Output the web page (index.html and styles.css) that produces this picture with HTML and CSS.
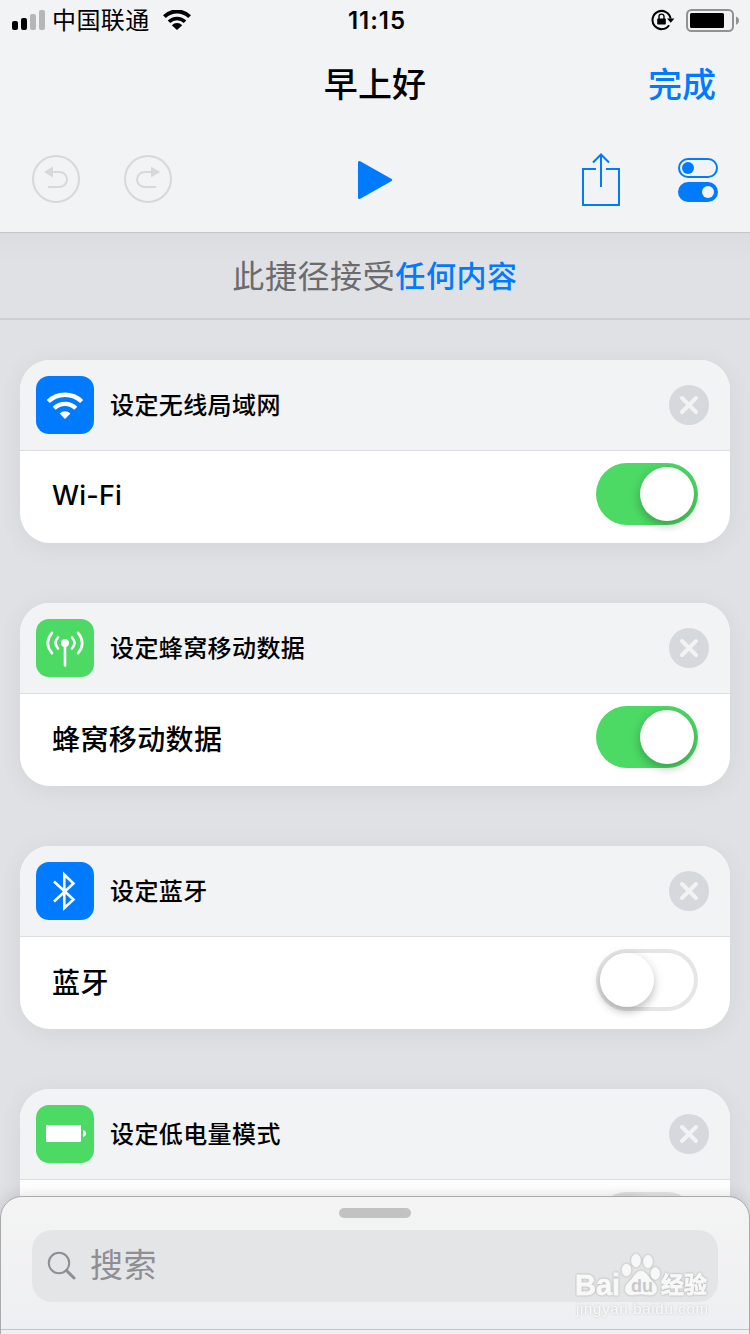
FILE: index.html
```
<!DOCTYPE html>
<html lang="zh-CN">
<head>
    <meta charset="UTF-8">
    <title>早上好</title>
    <link rel="stylesheet" href="styles.css">
</head>
<body>
<div class="screen">
    <header class="top">
        <div class="status">
            <div class="status-left">
                <svg class="signal" width="34" height="20" viewBox="0 0 34 20">
                    <rect x="0" y="11" width="6" height="9" rx="2"/>
                    <rect x="9" y="8" width="6" height="12" rx="2"/>
                    <rect x="18" y="4" width="6" height="16" rx="2" fill="#b5b6b7"/>
                    <rect x="27" y="0" width="6" height="20" rx="2" fill="#b5b6b7"/>
                </svg>
                <span class="carrier">中国联通</span>
                <svg width="28" height="20" viewBox="0 0 28 20">
                    <path d="M1.4 6.6a18 18 0 0 1 25.2 0" fill="none" stroke="#000" stroke-width="4"/>
                    <path d="M6 11.800a11.4 11.4 0 0 1 16 0" fill="none" stroke="#000" stroke-width="3.6"/>
                    <path d="M8.800 15.200a7 7 0 0 1 10.400 0L14 20z"/>
                </svg>
            </div>
            <span class="clock">11:15</span>
            <div class="status-right">
                <svg width="24" height="22" viewBox="0 0 24 22">
                    <path d="M18.1 16.2A9.1 9.1 0 1 1 19.6 9.6" fill="none" stroke="#000" stroke-width="2"/>
                    <path d="M16 9.4h7.4l-3.7 4.4z"/>
                    <rect x="6.2" y="9.5" width="8.6" height="6" rx="0.8"/>
                    <path d="M8 10V7.6a2.5 2.5 0 0 1 5 0V10" fill="none" stroke="#000" stroke-width="1.4"/>
                </svg>
                <svg class="battery" width="54" height="24" viewBox="0 0 54 24">
                    <rect x="1" y="1" width="46" height="21" rx="4.5" fill="none" stroke="#919293" stroke-width="2"/>
                    <rect x="4" y="4" width="34" height="15" rx="1.5"/>
                    <path d="M50 7.5c4 1.2 4 7 0 8.2z" fill="#919293"/>
                </svg>
            </div>
        </div>
        <div class="title-row">
            <h1>早上好</h1>
            <a class="done">完成</a>
        </div>
        <div class="toolbar">
            <div class="tools">
                <svg width="48" height="48" viewBox="0 0 48 48" fill="none" stroke="#d7d8d9" stroke-width="2">
                    <circle cx="24" cy="24" r="23"/>
                    <path d="M20 17h7.500a7.500 7.500 0 0 1 0 15H16"/>
                    <path d="M12 17l9-5.5v11z" fill="#d7d8d9" stroke="none"/>
                </svg>
                <svg width="48" height="48" viewBox="0 0 48 48" fill="none" stroke="#d7d8d9" stroke-width="2">
                    <circle cx="24" cy="24" r="23"/>
                    <path d="M28 17h-7.500a7.500 7.500 0 0 0 0 15H32"/>
                    <path d="M36 17l-9-5.5v11z" fill="#d7d8d9" stroke="none"/>
                </svg>
            </div>
            <svg class="play" width="34" height="40" viewBox="0 0 34 40">
                <path d="M1.5 2.5v35L32.5 20z" fill="#007aff" stroke="#007aff" stroke-width="3" stroke-linejoin="round"/>
            </svg>
            <div class="tools tools-right">
                <svg class="share" width="38" height="54" viewBox="0 0 38 54" fill="none" stroke="#007aff" stroke-width="2">
                    <path d="M14 16H1v36h36V16H24"/>
                    <path d="M19 34V2M11 9.5L19 1.500l8 8"/>
                </svg>
                <svg width="40" height="44" viewBox="0 0 40 44">
                    <rect x="1" y="1" width="38" height="18" rx="9" fill="none" stroke="#007aff" stroke-width="2"/>
                    <circle cx="10" cy="10" r="6" fill="#007aff"/>
                    <rect x="0" y="24" width="40" height="20" rx="10" fill="#007aff"/>
                    <circle cx="30" cy="34" r="6" fill="#f1f3f5"/>
                </svg>
            </div>
        </div>
    </header>

    <div class="accepts"><span>此捷径接受</span><a>任何内容</a></div>

    <main class="actions">
        <section class="card">
            <div class="card-head">
                <svg class="icon blue" width="58" height="58" viewBox="0 0 58 58">
                    <path d="M12.300 25.500a24 24 0 0 1 33.400 0" fill="none" stroke="#fff" stroke-width="4.400"/>
                    <path d="M18.200 32.200a15.500 15.500 0 0 1 21.600 0" fill="none" stroke="#fff" stroke-width="4.200"/>
                    <path d="M23.600 37.400a8 8 0 0 1 10.800 0L29 43z" fill="#fff"/>
                </svg>
                <h2>设定无线局域网</h2>
                <svg class="close" width="40" height="40" viewBox="0 0 40 40">
                    <circle cx="20" cy="20" r="20"/>
                    <path d="M13 13l14 14M27 13L13 27"/>
                </svg>
            </div>
            <div class="card-body">
                <span class="latin">Wi-Fi</span>
                <div class="switch on"></div>
            </div>
        </section>

        <section class="card">
            <div class="card-head">
                <svg class="icon green" width="58" height="58" viewBox="0 0 58 58" fill="none" stroke="#fff" stroke-width="2.600" stroke-linecap="round">
                    <circle cx="29" cy="24" r="4" fill="#fff" stroke="none"/>
                    <path d="M29 26v20.500"/>
                    <path d="M22 18.500q-5 5.500 0 11M36 18.500q5 5.500 0 11"/>
                    <path d="M16 13.800q-8.500 10.200 0 20.400M42 13.800q8.500 10.200 0 20.400"/>
                </svg>
                <h2>设定蜂窝移动数据</h2>
                <svg class="close" width="40" height="40" viewBox="0 0 40 40">
                    <circle cx="20" cy="20" r="20"/>
                    <path d="M13 13l14 14M27 13L13 27"/>
                </svg>
            </div>
            <div class="card-body">
                <span>蜂窝移动数据</span>
                <div class="switch on"></div>
            </div>
        </section>

        <section class="card">
            <div class="card-head">
                <svg class="icon blue" width="58" height="58" viewBox="0 0 58 58">
                    <path d="M18 19.500L37.500 37.500 28.300 46V12.500l9.200 9L18 39.500" fill="none" stroke="#fff" stroke-width="2.600"/>
                </svg>
                <h2>设定蓝牙</h2>
                <svg class="close" width="40" height="40" viewBox="0 0 40 40">
                    <circle cx="20" cy="20" r="20"/>
                    <path d="M13 13l14 14M27 13L13 27"/>
                </svg>
            </div>
            <div class="card-body">
                <span>蓝牙</span>
                <div class="switch"></div>
            </div>
        </section>

        <section class="card">
            <div class="card-head">
                <svg class="icon green" width="58" height="58" viewBox="0 0 58 58">
                    <rect x="10" y="20" width="35" height="17" rx="1" fill="#fff"/>
                    <path d="M47 25c4 .8 4 6.200 0 7z" fill="#fff"/>
                </svg>
                <h2>设定低电量模式</h2>
                <svg class="close" width="40" height="40" viewBox="0 0 40 40">
                    <circle cx="20" cy="20" r="20"/>
                    <path d="M13 13l14 14M27 13L13 27"/>
                </svg>
            </div>
            <div class="card-body">
                <div></div>
                <div class="switch"></div>
            </div>
        </section>
    </main>

    <!-- search drawer, slides over the list -->
    <div class="drawer">
        <div class="grabber"></div>
        <div class="search">
            <svg width="30" height="30" viewBox="0 0 30 30" fill="none" stroke="#8e8e93">
                <circle cx="12" cy="12" r="10.200" stroke-width="2"/>
                <path d="M19.500 19.500l7.500 7.500" stroke-width="3" stroke-linecap="round"/>
            </svg>
            <span>搜索</span>
        </div>
    </div>

    <div class="watermark">
        <svg width="136" height="70" viewBox="0 0 136 70">
            <g class="wm-mark">
                <ellipse cx="51.500" cy="20" rx="4.500" ry="6"/>
                <ellipse cx="61" cy="10.500" rx="4.500" ry="6.500"/>
                <ellipse cx="73" cy="11.500" rx="4.500" ry="6.500"/>
                <ellipse cx="80.300" cy="23.500" rx="4.500" ry="6"/>
                <path d="M66 21c5 0 7 6 11 10 8 7 5 14-2 14-4 0-6-1-9-1s-5 1-9 1c-7 0-10-7-2-14 4-4 6-10 11-10z"/>
            </g>
            <text class="wm-name" x="0" y="44.500">Bai</text>
            <text class="wm-du" x="56" y="42">du</text>
            <text class="wm-cn" x="86" y="43">经验</text>
            <text class="wm-url" x="1" y="63.500" textLength="132">jingyan.baidu.com</text>
        </svg>
    </div>
</div>
</body>
</html>
```
FILE: styles.css
```
body {
    margin: 0;
    background-color: #e0e1e5;
    font-family: Inter, "Noto Sans CJK SC", sans-serif;
    color: #000;
}

h1, h2 {
    margin: 0;
    font-weight: 500;
}

svg {
    display: block;
    flex: none;
}

.screen {
    position: relative;
    width: 750px;
    height: 1334px;
    overflow: hidden;
}

.top {
    height: 232px;
    background-color: #f1f3f5;
    border-bottom: 1px solid #c3c4c8;
}

/* status bar */
.status {
    display: grid;
    grid-template-columns: 1fr auto 1fr;
    align-items: center;
    height: 40px;
    padding: 0 10px 0 12px;
}

.status-left, .status-right {
    display: flex;
    align-items: center;
}

.status-right {
    justify-content: flex-end;
    gap: 11px;
}

.battery {
    margin-top: 1px;
}

.carrier {
    margin: 0 13px 0 6px;
    padding-top: 2px;
    font-size: 24px;
    line-height: 38px;
    letter-spacing: 0.4px;
}

.clock {
    padding: 1px 0 0 2px;
    font-size: 24px;
    font-weight: 600;
    line-height: 38px;
    letter-spacing: 1px;
}

.title-row {
    display: grid;
    grid-template-columns: 1fr auto 1fr;
    align-items: center;
    height: 86px;
    padding: 2px 34px 0;
    font-size: 34px;
    line-height: 50px;
}

.title-row h1 {
    grid-column: 2;
    font-size: 34px;
    letter-spacing: 0.2px;
}

.done {
    justify-self: end;
    color: #007aff;
    font-weight: 500;
}

.toolbar {
    display: grid;
    grid-template-columns: 1fr auto 1fr;
    align-items: center;
    height: 104px;
    padding: 0 32px;
}

.tools {
    display: flex;
    align-items: center;
    gap: 44px;
    margin-top: -2px;
}

.tools-right {
    justify-content: flex-end;
    gap: 58px;
    margin-top: 0;
}

.accepts {
    display: flex;
    justify-content: center;
    height: 85px;
    border-bottom: 2px solid #cdced1;
    background: linear-gradient(#dcdde1, #e0e1e5 30px);
    line-height: 87px;
}

.accepts span {
    color: #6b6b6d;
    font-size: 32px;
    letter-spacing: 0.6px;
}

.accepts a {
    color: #007aff;
    font-size: 30px;
    font-weight: 500;
    letter-spacing: 0.6px;
}

.actions {
    display: flex;
    flex-direction: column;
    gap: 60px;
    padding: 40px 20px;
}

.card {
    flex: none;
    border-radius: 30px;
    background-color: #fff;
    box-shadow: 0 4px 28px rgba(0, 0, 0, 0.06);
}

.card-head {
    display: flex;
    align-items: center;
    height: 90px;
    padding: 0 21px 0 16px;
    border-bottom: 1px solid #dcdde0;
    border-radius: 30px 30px 0 0;
    background-color: #f2f3f5;
}

.card-head h2 {
    flex: 1;
    margin-left: 16px;
    padding-top: 2px;
    font-size: 24px;
    line-height: 36px;
    letter-spacing: 0.4px;
}

.icon {
    border-radius: 13px;
}

.blue {
    background-color: #007aff;
}

.green {
    background-color: #4cd964;
}

.close circle {
    fill: #d5d8dd;
}

.close path {
    stroke: #f2f3f5;
    stroke-width: 4;
    stroke-linecap: round;
}

.card-body {
    display: flex;
    align-items: center;
    justify-content: space-between;
    box-sizing: border-box;
    height: 92px;
    padding: 0 32px 4px;
    font-size: 28px;
    font-weight: 500;
    letter-spacing: 0.4px;
}

.card-body .latin {
    padding-top: 1px;
    font-size: 27px;
    font-weight: 450;
    letter-spacing: 0.2px;
}

.switch {
    box-sizing: border-box;
    width: 102px;
    height: 62px;
    margin-top: -2px;
    padding: 4px;
    border-radius: 31px;
    background-color: #fff;
    box-shadow: inset 0 0 0 4px #e5e5e5;
}

.switch::before {
    content: "";
    display: block;
    width: 54px;
    height: 54px;
    border-radius: 50%;
    background-color: #fff;
    box-shadow: 0 5px 8px rgba(0, 0, 0, 0.2), 0 1px 14px rgba(0, 0, 0, 0.08);
}

.switch.on {
    background-color: #4cd964;
    box-shadow: none;
}

.switch.on::before {
    margin-left: 40px;
}

.drawer {
    position: absolute;
    left: 0;
    right: 0;
    top: 1196px;
    box-sizing: border-box;
    height: 160px;
    padding: 11px 31px 0;
    border: 1px solid #a9aaab;
    border-radius: 22px;
    background: linear-gradient(#f4f4f4, #eeeff2 132px, #c3c4c7 132px, #c3c4c7 133px, #eef0f3 133px);
    box-shadow: 0 0 16px rgba(0, 0, 0, 0.14);
}

.grabber {
    width: 72px;
    height: 10px;
    margin: 0 auto 12px;
    border-radius: 5px;
    background-color: #c2c2c2;
}

.search {
    display: flex;
    align-items: center;
    gap: 13px;
    box-sizing: border-box;
    height: 72px;
    padding: 0 0 1px 15px;
    border-radius: 20px;
    background-color: #e4e5e6;
    color: #8e8e93;
    font-size: 33px;
    letter-spacing: 0.6px;
}

.search span {
    padding-bottom: 5px;
}

/* site watermark */
.watermark {
    position: absolute;
    left: 575px;
    top: 1250px;
}

.watermark text, .wm-mark {
    fill: #f8f8f8;
    stroke: #f8f8f8;
    stroke-width: 0.8px;
    filter: drop-shadow(0 0 1px #a4a5a6);
}

.wm-name {
    font: bold 29px "Liberation Sans", sans-serif;
}

.watermark .wm-du {
    font: bold 18px "Liberation Sans", sans-serif;
    fill: #c8c9ca;
    stroke: none;
    filter: none;
}

.wm-cn {
    font: bold 23px "Noto Sans CJK SC", sans-serif;
}

.watermark .wm-url {
    font: 15px "Liberation Sans", sans-serif;
    stroke: none;
    filter: drop-shadow(0 0 1px #c4c5c6);
}
```
